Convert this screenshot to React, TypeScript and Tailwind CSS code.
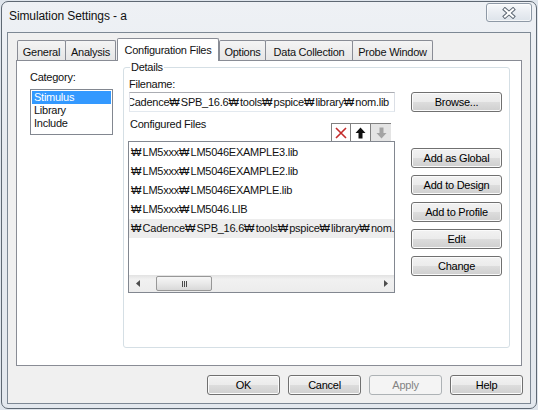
import React from "react";

const W = "\u20A9";

const btn =
  "flex h-[20px] items-center justify-center rounded-[3px] border border-[#707070] bg-[linear-gradient(to_bottom,#f2f2f2_0%,#ebebeb_50%,#dddddd_50%,#cfcfcf_100%)] shadow-[inset_0_0_0_1px_#fbfbfb] text-[11px] leading-none text-black";

const tabs = [
  { label: "General", cls: "w-[49px]" },
  { label: "Analysis", cls: "-ml-[1px] w-[51px]" },
  { label: "Configuration Files", cls: "ml-[1px] w-[102px]", active: true },
  { label: "Options", cls: "w-[47px]" },
  { label: "Data Collection", cls: "-ml-[1px] w-[88px]" },
  { label: "Probe Window", cls: "-ml-[1px] w-[81px]" },
];

const files = [
  `${W}LM5xxx${W}LM5046EXAMPLE3.lib`,
  `${W}LM5xxx${W}LM5046EXAMPLE2.lib`,
  `${W}LM5xxx${W}LM5046EXAMPLE.lib`,
  `${W}LM5xxx${W}LM5046.LIB`,
  `${W}Cadence${W}SPB_16.6${W}tools${W}pspice${W}library${W}nom.lib`,
];

// the won sign stands in for the backslash in a Korean system font, a bit wider there
const Path = ({ text }: { text: string }) => (
  <>
    {text.split(W).map((part, i) => (
      <React.Fragment key={i}>
        {i > 0 && <span className="tracking-[1.2px]">{W}</span>}
        {part}
      </React.Fragment>
    ))}
  </>
);

const CloseGlyph = () => (
  <svg width="14" height="12" viewBox="0 0 14 12">
    <line x1="3" y1="2.5" x2="11" y2="9.5" stroke="#5d6874" strokeWidth="4" strokeLinecap="square" />
    <line x1="11" y1="2.5" x2="3" y2="9.5" stroke="#5d6874" strokeWidth="4" strokeLinecap="square" />
    <line x1="3" y1="2.5" x2="11" y2="9.5" stroke="#ffffff" strokeWidth="2" strokeLinecap="square" />
    <line x1="11" y1="2.5" x2="3" y2="9.5" stroke="#ffffff" strokeWidth="2" strokeLinecap="square" />
  </svg>
);

const Toolbar = () => (
  <div className="flex h-[18px] border-t border-[#808080]">
    <div className="flex w-[20px] items-center justify-center border-l border-r border-[#808080] bg-white">
      <svg width="12" height="12" viewBox="0 0 12 12">
        <path d="M1 1 L11 11 M11 1 L1 11" stroke="#c42b2b" strokeWidth="1.6" />
      </svg>
    </div>
    <div className="flex w-[20px] items-center justify-center border-r border-[#808080] bg-white">
      <svg width="11" height="12" viewBox="0 0 11 12">
        <path d="M5.5 0.5 L10.5 6 L7.5 6 L7.5 11.5 L3.5 11.5 L3.5 6 L0.5 6 Z" fill="#111" />
      </svg>
    </div>
    <div className="flex w-[20px] items-center justify-center bg-[#e4e4e4]">
      <svg width="11" height="12" viewBox="0 0 11 12">
        <path d="M3.5 0.5 L7.5 0.5 L7.5 6 L10.5 6 L5.5 11.5 L0.5 6 L3.5 6 Z" fill="#a3a3a3" />
      </svg>
    </div>
  </div>
);

const ScrollBar = () => (
  <div className="flex h-[17px] items-center bg-[linear-gradient(to_bottom,#e2e2e2,#f1f1f1_25%,#ececec)]">
    <div className="flex w-[17px] items-center justify-center">
      <svg width="4" height="7" viewBox="0 0 4 7">
        <path d="M4 0 L0 3.5 L4 7 Z" fill="#4d4d4d" />
      </svg>
    </div>
    <div className="ml-[10px] flex h-[15px] w-[56px] items-center justify-center gap-[1px] rounded-[2px] border border-[#979797] bg-[linear-gradient(to_bottom,#f6f6f6,#e9e9e9_50%,#d9d9d9)]">
      <span className="h-[6px] w-[1px] bg-[#4a4a4a]" />
      <span className="h-[6px] w-[1px] bg-[#4a4a4a]" />
      <span className="h-[6px] w-[1px] bg-[#4a4a4a]" />
    </div>
    <div className="flex-1" />
    <div className="flex w-[17px] items-center justify-center">
      <svg width="4" height="7" viewBox="0 0 4 7">
        <path d="M0 0 L4 3.5 L0 7 Z" fill="#4d4d4d" />
      </svg>
    </div>
  </div>
);

const App = () => {
  return (
    <div className="h-[410px] w-[538px] overflow-hidden bg-[#dfe5ec] p-[1px] font-['Liberation_Sans',Arial,sans-serif] text-[11px] tracking-[-0.25px] text-[#111]">
      <div className="flex h-[408px] flex-col rounded-[7px] border border-[#5e6873] bg-[linear-gradient(to_bottom,#eef1f5,#e5e9ee_40%,#e3e8ee)]">
        {/* title bar */}
        <div className="flex h-[30px] items-start justify-between">
          <div className="pl-[7px] pt-[7px] text-[12px] leading-[15px] tracking-[-0.1px]">Simulation Settings - a</div>
          <div className="mr-[4px] mt-[1px] flex h-[19px] w-[46px] items-center justify-center rounded-[3px] border border-[#8e99a6] bg-[linear-gradient(to_bottom,#f7f9fb,#e9edf2_50%,#dde3ea)] shadow-[inset_0_0_0_1px_#ffffffaa]">
            <CloseGlyph />
          </div>
        </div>

        {/* client area */}
        <div className="mx-[5px] mb-[4px] flex flex-1 flex-col border border-[#7d8894] bg-[#f0f0f0]">
          {/* tabs */}
          <div className="mt-[5px] flex h-[22px] items-end pl-[9px]">
            {tabs.map((t) =>
              t.active ? (
                <div
                  key={t.label}
                  className={`relative z-10 -mb-[1px] flex h-[23px] items-center justify-center rounded-t-[2px] border border-b-0 border-[#898c95] bg-white ${t.cls}`}
                >
                  {t.label}
                </div>
              ) : (
                <div
                  key={t.label}
                  className={`flex h-[20px] items-center justify-center rounded-t-[2px] border border-b-0 border-[#898c95] bg-[linear-gradient(to_bottom,#f4f4f4,#e6e6e6)] pt-[3px] ${t.cls}`}
                >
                  {t.label}
                </div>
              )
            )}
          </div>

          {/* tab panel */}
          <div className="mx-[8px] flex h-[306px] border border-[#898c95] bg-white">
            {/* category */}
            <div className="ml-[13px] mt-[10px] flex w-[83px] flex-col">
              <div className="leading-[13px]">Category:</div>
              <div className="mt-[5px] flex h-[46px] flex-col border border-[#828790] pt-[1px]">
                <div className="mx-[1px] h-[13px] bg-[#3399ff] pl-[2px] leading-[13px] text-white">Stimulus</div>
                <div className="h-[13px] pl-[3px] leading-[13px]">Library</div>
                <div className="h-[13px] pl-[3px] leading-[13px]">Include</div>
              </div>
            </div>

            {/* details */}
            <fieldset className="ml-[10px] h-[287px] w-[387px] rounded-[3px] border border-[#d5dfe5] px-[4px]">
              <legend className="ml-[2px] px-[1px] leading-[13px]">Details</legend>
              <div className="flex">
                <div className="flex w-[267px] flex-col">
                  <div className="mt-[4px] pl-[1px] leading-[13px]">Filename:</div>
                  <div className="mt-[1px] ml-[1px] flex h-[20px] items-center justify-end overflow-hidden whitespace-nowrap border border-[#abadb3] border-b-[#e3e9ef] border-l-[#e2e3ea] border-r-[#dbdfe6] bg-white pr-[5px]">
                    <Path text={`C:${W}Cadence${W}SPB_16.6${W}tools${W}pspice${W}library${W}nom.lib`} />
                  </div>
                  <div className="flex h-[29px] items-start justify-between">
                    <div className="mt-[6px] pl-[2px] leading-[13px]">Configured Files</div>
                    <div className="mt-[11px] mr-[4px]">
                      <Toolbar />
                    </div>
                  </div>
                  <div className="flex h-[152px] flex-col border border-[#828790] bg-white">
                    <div className="flex-1 overflow-hidden pt-[1px]">
                      {files.map((f, i) => (
                        <div
                          key={f}
                          className={`h-[19px] whitespace-nowrap pl-[2px] leading-[19px] ${i === 4 ? "bg-[#ededed]" : ""}`}
                        >
                          <Path text={f} />
                        </div>
                      ))}
                    </div>
                    <ScrollBar />
                  </div>
                </div>

                <div className="ml-[16px] flex w-[91px] flex-col">
                  <div className={`mt-[18px] ${btn}`}>Browse...</div>
                  <div className="mt-[36px] flex flex-col gap-[7px]">
                    <div className={btn}>Add as Global</div>
                    <div className={btn}>Add to Design</div>
                    <div className={btn}>Add to Profile</div>
                    <div className={btn}>Edit</div>
                    <div className={btn}>Change</div>
                  </div>
                </div>
              </div>
            </fieldset>
          </div>

          {/* dialog buttons */}
          <div className="mt-[9px] flex justify-end gap-[8px] pr-[7px]">
            <div className={`w-[73px] ${btn}`}>OK</div>
            <div className={`w-[73px] ${btn}`}>Cancel</div>
            <div className="flex h-[20px] w-[73px] items-center justify-center rounded-[3px] border border-[#adb2b5] bg-[#f4f4f4] text-[#838383]">
              Apply
            </div>
            <div className={`w-[73px] ${btn}`}>Help</div>
          </div>
        </div>
      </div>
    </div>
  );
};

export default App;
